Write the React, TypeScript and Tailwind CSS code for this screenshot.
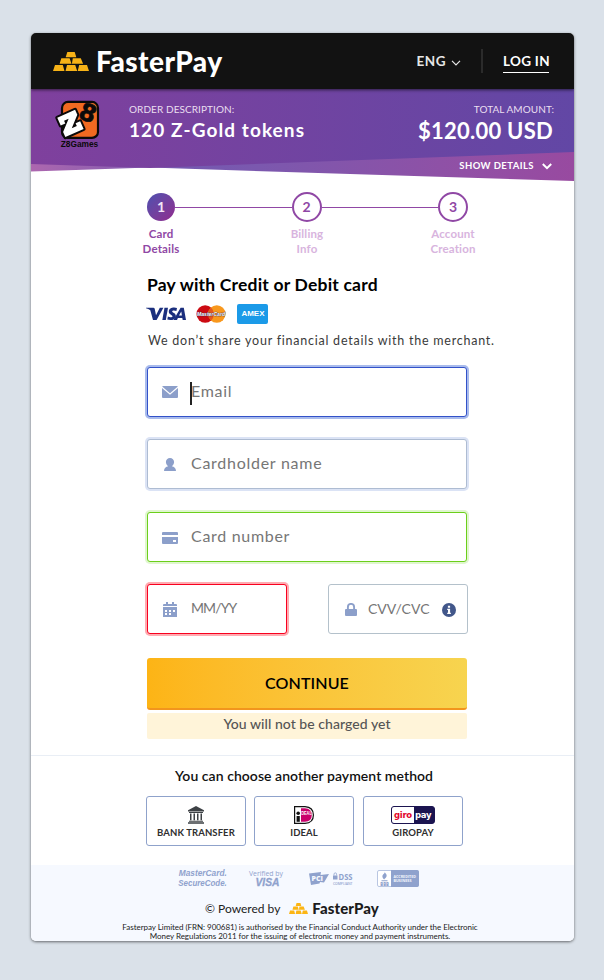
import React from "react";

function GoldBars({ className, fill = "#f7b217" }: { className: string; fill?: string }) {
  return (
    <svg className={className} viewBox="0 0 36 19" preserveAspectRatio="none" fill={fill}>
      <path d="M14.3 0h7.4l1.6 5.2H12.7z" />
      <path d="M8.3 6.2h8.3l1.9 5.6H6.6zM19.8 6.2h8l2.3 5.6H18.9z" />
      <path d="M2 13h7.8l1.7 6H0zM14 13h8.2l2 6H12.5zM26.2 13h7.8l2 6H24.7z" />
    </svg>
  );
}

function Z8Logo() {
  return (
    <svg className="h-[50px] w-[46px] overflow-visible" viewBox="0 0 46 50">
      <rect x="6" y="1.9" width="36" height="36" rx="6" fill="#f26a21" stroke="#0c0a0a" strokeWidth="2.2" />
      <text x="32.300" y="21.300" textAnchor="middle" transform="rotate(22 32 12)" fontFamily="DejaVu Sans" fontWeight="700" fontSize="24" fill="#0c0a0a" stroke="#0c0a0a" strokeWidth=".6">
        8
      </text>
      <g transform="rotate(-24 14 23)">
        <path d="M4.500 13h19.500v5.500L13.500 28.500h5.500V25.500h5v8.500H4v-5.500L14.500 18.500H9.500V21.500h-5z" fill="#fff" stroke="#0c0a0a" strokeWidth="4" strokeLinejoin="round" paintOrder="stroke" />
      </g>
      <text x="23.500" y="46.600" textAnchor="middle" textLength="37.500" lengthAdjust="spacingAndGlyphs" fontFamily="Liberation Sans" fontWeight="700" fontSize="8.4" fill="#0c0a0a">
        Z8Games
      </text>
    </svg>
  );
}

function Header() {
  return (
    <header className="relative z-10 flex h-14 items-center bg-[#121212] pr-6 pl-[22px] text-white shadow-[0_1px_3px_rgba(0,0,0,0.6)]">
      <GoldBars className="h-[19px] w-9" />
      <span className="ml-[7px] w-[127px] text-[28px] leading-8 font-black tracking-[0.45px]">FasterPay</span>
      <span className="ml-auto text-[13.5px] leading-5 font-bold tracking-[0.5px] text-[#e6e6e6]">ENG</span>
      <svg className="mt-1 ml-[5px] h-[6px] w-[10px]" viewBox="0 0 10 6" fill="none" stroke="#e6e6e6" strokeWidth="1.2">
        <path d="M1 .8 5 4.900 9 .8" />
      </svg>
      <span className="ml-[20px] h-6 w-[2px] bg-[#2b2b2b]" />
      <span className="mt-px mr-px ml-5 w-[46px] border-b border-white pt-[2px] pb-px text-[13.5px] leading-[19px] font-bold tracking-[0.3px] whitespace-nowrap">LOG IN</span>
    </header>
  );
}

function Hero() {
  return (
    <section className="relative h-[92px]">
      <svg className="absolute inset-0 h-[92px] w-[543px]" viewBox="0 0 543 92">
        <defs>
          <linearGradient id="main" x1="0" x2="1" y1="0" y2="0">
            <stop offset="0" stopColor="#7f409d" />
            <stop offset="1" stopColor="#6247a5" />
          </linearGradient>
          <linearGradient id="back" x1="0" x2="1" y1="0" y2="0">
            <stop offset="0" stopColor="#ad67af" />
            <stop offset=".28" stopColor="#7459b0" />
            <stop offset=".42" stopColor="#7b58ae" />
            <stop offset=".8" stopColor="#9150a5" />
            <stop offset="1" stopColor="#984aa0" />
          </linearGradient>
        </defs>
        <path d="M0 0H543V92L119 78.6 0 82.6z" fill="url(#back)" />
        <path d="M0 0H543V63L119 79 0 75z" fill="url(#main)" />
      </svg>
      <div className="relative flex pr-5 pl-[25px] text-white">
        <div className="pt-[11px]">
          <Z8Logo />
        </div>
        <div className="ml-[27px] pt-3">
          <div className="text-[10px] leading-4 tracking-[0.08px] text-[#eadff0]">ORDER DESCRIPTION:</div>
          <div className="mt-px text-[19px] leading-6 font-bold tracking-[1.08px]">120 Z-Gold tokens</div>
        </div>
        <div className="ml-auto pt-3 text-right">
          <div className="text-[10px] leading-4 tracking-[0.08px] text-[#eadff0]">TOTAL AMOUNT:</div>
          <div className="mt-[1px] mr-px text-[22px] leading-[26px] font-bold tracking-[0.25px]">$120.00 USD</div>
          <div className="mt-[14px] flex items-center justify-end text-[9.5px] leading-4 font-bold tracking-[0.43px]">
            SHOW DETAILS
            <svg className="mr-[2px] ml-2 h-[7px] w-[10px]" viewBox="0 0 10 7" fill="none" stroke="#fff" strokeWidth="2">
              <path d="M.8 1 5 5.200 9.200 1" />
            </svg>
          </div>
        </div>
      </div>
    </section>
  );
}

function Steps() {
  return (
    <section className="pt-[11px]">
      <div className="ml-[116px] flex h-[30px] w-[321px] items-center text-[14px] font-bold text-[#9048a5]">
        <span className="flex h-7 w-7 items-center justify-center rounded-full bg-linear-to-br from-[#4a4fb0] to-[#90288e] pb-px text-[#f3e6f6]">1</span>
        <span className="h-px flex-1 bg-[#9048a5]" />
        <span className="flex h-[30px] w-[30px] items-center justify-center rounded-full border-2 border-[#9048a5] pb-px">2</span>
        <span className="h-px flex-1 bg-[#9048a5]" />
        <span className="flex h-[30px] w-[30px] items-center justify-center rounded-full border-2 border-[#9048a5] pb-px">3</span>
      </div>
      <div className="mt-1 ml-[57px] grid w-[438px] grid-cols-3 text-center text-[11.5px] leading-[15px] font-bold tracking-[0.15px] text-[#d8b4de]">
        <div className="text-[#9048a5]">Card<br />Details</div>
        <div>Billing<br />Info</div>
        <div>Account<br />Creation</div>
      </div>
    </section>
  );
}

function CardLogos() {
  return (
    <div className="mt-[8px] flex h-5 items-center">
      <svg className="-ml-px h-[14px] w-[42px]" viewBox="0 0 42 14">
        <g fill="#1b2f7e">
          <path d="M0 .8h7.4q1 0 1.3 1l1.3 6.5L13.8.8h3.6L10.6 13H7L4.3 3.2Q2.5 1.6 0 1.2z" />
          <path d="M18.500.8H22L19.800 13h-3.500z" />
          <path d="M31 1.100 30.400 4c-1.500-.7-4.200-.9-4.200.4 0 1.300 3.700 1.500 3.700 4.500 0 3.600-4.600 5-8.600 3.700l.6-3c1.700.9 4.600 1 4.600-.4 0-1.300-3.700-1.600-3.700-4.500C22.800 1 27.500-.2 31 1.100z" />
          <path d="M34.600.8h3.200L40 13h-3.300l-.4-1.900h-4.400L31 13h-3.500zM35.300 4.600 33 8.600h2.900z" fillRule="evenodd" />
        </g>
      </svg>
      <svg className="ml-2 h-[18px] w-[30px] overflow-visible" viewBox="0 0 30 18">
        <circle cx="9.200" cy="9" r="8.700" fill="#cc0a12" />
        <circle cx="20.800" cy="9" r="8.700" fill="#f8981d" />
        <path d="M15 2.500a8.700 8.700 0 0 1 0 13 8.700 8.700 0 0 1 0-13z" fill="#e4571c" />
        <text x="15" y="11.200" textAnchor="middle" textLength="28" lengthAdjust="spacingAndGlyphs" fontFamily="Liberation Sans" fontWeight="700" fontStyle="italic" fontSize="6.200" fill="#fff" stroke="#3b2a50" strokeWidth=".7" paintOrder="stroke">
          MasterCard
        </text>
      </svg>
      <span className="ml-[11px] flex h-5 w-[31px] items-center justify-center rounded-[2px] bg-[#1b9ae8]">
        <svg className="h-[8px] w-6 overflow-visible" viewBox="0 0 24 8">
          <text x="12" y="6.300" textAnchor="middle" textLength="23" lengthAdjust="spacingAndGlyphs" fontFamily="Liberation Sans" fontWeight="700" fontSize="7" fill="#fff">
            AMEX
          </text>
        </svg>
      </span>
    </div>
  );
}

const iconFill = "#8c9fca";

function Mail() {
  return (
    <svg className="h-3 w-4" viewBox="0 0 16 12" fill={iconFill}>
      <path d="M1 0h14q.6 0 .8.5L8 7.200.2.500Q.4 0 1 0z" />
      <path d="M0 2 8 8.800 16 2v9q0 1-1 1H1q-1 0-1-1z" />
    </svg>
  );
}

function Person() {
  return (
    <svg className="mx-[2px] h-[13px] w-3" viewBox="0 0 12 13" fill={iconFill}>
      <path d="M6 0c2.400 0 4.100 1.700 4.100 4.100C10.100 6 9 7.500 7.800 8.200 10.200 8.800 11.900 10 12 13H0c.1-3 1.800-4.200 4.200-4.800C3 7.500 1.900 6 1.900 4.100 1.900 1.700 3.600 0 6 0z" />
    </svg>
  );
}

function CreditCard() {
  return (
    <svg className="mt-px h-3 w-4" viewBox="0 0 16 12" fill={iconFill}>
      <path d="M1 0h14q1 0 1 1v2H0V1q0-1 1-1z" />
      <path d="M0 5h16v6q0 1-1 1H1q-1 0-1-1zM11 8v2h3V8z" fillRule="evenodd" />
    </svg>
  );
}

function Calendar() {
  return (
    <svg className="mx-px h-[15px] w-[14px]" viewBox="0 0 14 15" fill={iconFill}>
      <path d="M3 0h2v2h4V0h2v2h2q1 0 1 1v1H0V3q0-1 1-1h2z" />
      <path d="M0 5h14v10H0zM2 8v2h2V8zM6 8v2h2V8zM10 8v2h2V8zM2 11v2h2v-2zM6 11v2h2v-2z" fillRule="evenodd" />
    </svg>
  );
}

function Lock() {
  return (
    <svg className="h-[13px] w-3" viewBox="0 0 12 13">
      <rect y="6" width="12" height="7" rx="1" fill={iconFill} />
      <path d="M2.900 6.500V4a3.100 3.100 0 0 1 6.200 0v2.500" fill="none" stroke={iconFill} strokeWidth="1.900" />
    </svg>
  );
}

function Info() {
  return (
    <svg className="h-[14px] w-[14px]" viewBox="0 0 14 14">
      <circle cx="7" cy="7" r="7" fill="#42578a" />
      <path d="M5.900 2.800h2.200v1.900H5.900zM5.200 5.700h2.900v4.100h.8v1.300H5.200V9.800h.8V7h-.8z" fill="#fff" />
    </svg>
  );
}

function Field({ icon, label, className }: { icon: React.ReactNode; label: string; className: string }) {
  return (
    <div className={"flex h-[50px] items-center rounded-[3px] border bg-white pl-[14px] text-[#767676] " + className}>
      {icon}
      <span className="ml-[13px] pb-[3px] whitespace-nowrap">{label}</span>
    </div>
  );
}

function Form() {
  return (
    <section className="ml-[116px] w-[320px] pt-[18px]">
      <h1 className="text-[17.5px] leading-[22px] font-bold tracking-[0.2px] whitespace-nowrap text-black">Pay with Credit or Debit card</h1>
      <CardLogos />
      <p className="mt-[7px] ml-px text-[12.5px] leading-5 tracking-[0.76px] whitespace-nowrap text-[#3a3a3a]">We don’t share your financial details with the merchant.</p>

      <div className="mt-4 flex h-[50px] items-center rounded-[3px] border border-[#3352c9] bg-white pl-[14px] text-[16px] tracking-[0.7px] text-[#767676] shadow-[0_0_0_2px_#a9bbec]">
        <Mail />
        <span className="ml-3 h-[23px] w-[2px] translate-y-px bg-[#222]" />
        <span className="-ml-px pb-[3px]">Email</span>
      </div>
      <Field icon={<Person />} label="Cardholder name" className="mt-[22px] border-[#aebcd2] text-[16px] tracking-[0.73px] shadow-[0_0_0_2px_#dbe3f5]" />
      <Field icon={<CreditCard />} label="Card number" className="mt-[23px] border-[#6ccf1b] text-[16px] tracking-[0.7px] shadow-[0_0_0_2px_#e0f6cf]" />
      <div className="mt-[22px] flex w-[321px] justify-between">
        <Field icon={<Calendar />} label="MM/YY" className="w-[140px] border-[#f8001f] text-[14px] tracking-[-0.9px] shadow-[0_0_0_2px_#ffabb1]" />
        <div className="flex h-[50px] w-[140px] items-center rounded-[3px] border border-[#b4c1cb] pr-[11px] pl-4 text-[14px] text-[#767676]">
          <Lock />
          <span className="ml-[11px] pb-px">CVV/CVC</span>
          <span className="ml-auto pt-[2px]">
            <Info />
          </span>
        </div>
      </div>
      <button className="mt-6 block h-[52px] w-full rounded-[3px] border-b-2 border-[#f2951d] bg-linear-to-r from-[#fdb415] to-[#f7d44f] text-[16px] font-semibold tracking-[0.1px] text-black">CONTINUE</button>
      <div className="mt-[3px] h-[26px] rounded-[2px] bg-[#fff4d9] text-center text-[14px] leading-[22px] font-medium tracking-[0.05px] text-[#555]">You will not be charged yet</div>
    </section>
  );
}

function Bank() {
  return (
    <svg className="h-[18px] w-4" viewBox="0 0 16 18" fill="#3d4145">
      <path d="M8 0 16 4.200V5.500H0V4.200z" />
      <path d="M1 6h14v1H1zM2 7.500h1.500v6.800H2zM5.500 7.500H7v6.800H5.500zM9 7.500h1.500v6.800H9zM12.500 7.500H14v6.800h-1.500zM1 14.700h14v1H1zM0 16.200h16v1.500H0z" />
    </svg>
  );
}

function Ideal() {
  return (
    <svg className="h-[18px] w-5" viewBox="0 0 20 18">
      <path d="M.6.600H11q8.400.500 8.400 8.400T11 17.400H.6z" fill="#fff" stroke="#111" strokeWidth="1.200" />
      <path d="M7 2.200h4q6.800.400 6.800 6.800T11 15.800H7z" fill="#c9006b" />
      <circle cx="4.200" cy="7.200" r="1.800" fill="#111" />
      <path d="M2.600 10h3.200v5.800H2.600z" fill="#111" />
      <text x="12.500" y="9" textAnchor="middle" textLength="10.500" lengthAdjust="spacingAndGlyphs" fontFamily="Liberation Sans" fontWeight="700" fontSize="4.800" fill="#fff">
        DEAL
      </text>
    </svg>
  );
}

function Giropay() {
  return (
    <span className="flex h-[18px] w-11 rounded-[3px] border border-[#1b1450] bg-[#1b1450] font-['DejaVu_Sans'] text-[8.5px] leading-4 font-bold">
      <span className="w-[22px] rounded-l-[2px] bg-white pl-[2px] tracking-[-0.3px] text-[#e2062c]">giro</span>
      <span className="w-5 pl-[1px] tracking-[-0.3px] text-white">pay</span>
    </span>
  );
}

function Method({ icon, label, className = "" }: { icon: React.ReactNode; label: string; className?: string }) {
  return (
    <div className={"flex h-[50px] w-[100px] flex-col items-center rounded-[3px] border border-[#8fa2cb] bg-white pt-[9px] " + className}>
      {icon}
      <span className="mt-px text-[9.5px] leading-4 font-bold tracking-[0.1px] text-[#2f2f2f]">{label}</span>
    </div>
  );
}

function Badges() {
  return (
    <div className="ml-[147px] flex h-[18px] w-[241px] items-center text-[#8fa2cd]">
      <svg className="h-5 w-[50px] overflow-visible" viewBox="0 0 50 20" fill="currentColor" fontFamily="Liberation Sans" fontWeight="700" fontStyle="italic" fontSize="9">
        <text x=".8" y="8.400" textLength="48" lengthAdjust="spacingAndGlyphs">MasterCard.</text>
        <text x=".3" y="17.800" textLength="48.500" lengthAdjust="spacingAndGlyphs">SecureCode.</text>
      </svg>
      <svg className="ml-[21px] h-5 w-[34px] overflow-visible" viewBox="0 0 34 20" fill="currentColor">
        <text x="0" y="7.500" textLength="34" lengthAdjust="spacingAndGlyphs" fontFamily="Open Sans" fontSize="7">Verified by</text>
        <text x="6.500" y="18" textLength="24" lengthAdjust="spacingAndGlyphs" fontFamily="Liberation Sans" fontWeight="700" fontStyle="italic" fontSize="11" stroke="currentColor" strokeWidth=".3">VISA</text>
      </svg>
      <svg className="mt-px ml-[26px] h-[14px] w-11 overflow-visible" viewBox="0 0 44 14" fill="currentColor">
        <path d="M0 1.500 12 0l-.5 3L20 2l-5 8.500-4-.5-.5 1.500-8.500 1.500z" />
        <text x="2.500" y="9" fontFamily="Open Sans" fontWeight="800" fontSize="7" fill="#f6f9ff">PCI</text>
        <rect x="24" y="3.500" width="4.500" height="4" />
        <path d="M25 3.500V2.200a1.300 1.300 0 0 1 2.600 0v1.300" fill="none" stroke="currentColor" strokeWidth=".8" />
        <text x="29.500" y="7.500" textLength="14" lengthAdjust="spacingAndGlyphs" fontFamily="Open Sans" fontWeight="700" fontSize="8">DSS</text>
        <text x="24" y="12.500" textLength="19.500" lengthAdjust="spacingAndGlyphs" fontFamily="Open Sans" fontWeight="600" fontSize="3.500">COMPLIANT</text>
      </svg>
      <svg className="ml-6 h-[17px] w-[42px]" viewBox="0 0 42 17" fill="currentColor">
        <rect x=".5" y=".5" width="41" height="16" rx="1.500" fill="#fff" stroke="#b9c6e2" />
        <path d="M14 0h26q2 0 2 2v13q0 2-2 2H14z" />
        <path d="M8 1.500c-.5 2 2.500 2.500 1.500 5C9 8 7.500 8.500 7.300 9.500 6 8.500 5 7 5.500 5.500S8 3.500 8 1.500zM4.500 10.200h6v1h-6z" />
        <text x="3.300" y="15.800" textLength="8.500" lengthAdjust="spacingAndGlyphs" fontFamily="Open Sans" fontWeight="800" fontSize="4.800">BBB</text>
        <g fill="#f2f5fc" fontFamily="Open Sans" fontWeight="700" fontSize="4">
          <text x="16.500" y="7.800" textLength="22.500" lengthAdjust="spacingAndGlyphs">ACCREDITED</text>
          <text x="16.500" y="12" textLength="18" lengthAdjust="spacingAndGlyphs">BUSINESS</text>
        </g>
      </svg>
    </div>
  );
}

export default function App() {
  return (
    <div className="h-[980px] w-[604px] bg-[#dae1e9] pt-[33px] pl-[31px] font-['Lato',sans-serif]">
      <main className="h-[908px] w-[543px] overflow-hidden rounded-[5px] bg-white shadow-[0_1px_3px_rgba(0,0,0,0.55)]">
        <Header />
        <Hero />
        <Steps />
        <Form />
        <section className="mt-4 h-[110px] border-t border-[#e9eef5] pt-[9px]">
          <h2 className="pl-[3px] text-center text-[14px] leading-[22px] font-semibold tracking-[0.05px] text-[#111]">You can choose another payment method</h2>
          <div className="mt-[9px] ml-[115px] flex">
            <Method icon={<Bank />} label="BANK TRANSFER" />
            <Method icon={<Ideal />} label="IDEAL" className="ml-2" />
            <Method icon={<Giropay />} label="GIROPAY" className="ml-[9px]" />
          </div>
        </section>
        <footer className="h-[76px] bg-[#f6f9ff] pt-1">
          <Badges />
          <div className="mt-[10px] ml-[174px] flex h-6 items-center">
            <span className="text-[12px] leading-5 whitespace-nowrap text-[#222]">© Powered by</span>
            <GoldBars className="mb-px ml-[9px] h-[11px] w-[19px]" fill="#fcb514" />
            <span className="ml-[4px] pb-[3px] text-[15px] leading-5 font-black tracking-[0.1px] text-[#1c1c1c]">FasterPay</span>
          </div>
          <p className="pt-[2px] pr-[5px] text-center text-[8px] leading-[9px] tracking-[-0.04px] whitespace-nowrap text-[#222]">
            Fasterpay Limited (FRN: 900681) is authorised by the Financial Conduct Authority under the Electronic
            <br />
            Money Regulations 2011 for the issuing of electronic money and payment instruments.
          </p>
        </footer>
      </main>
    </div>
  );
}
